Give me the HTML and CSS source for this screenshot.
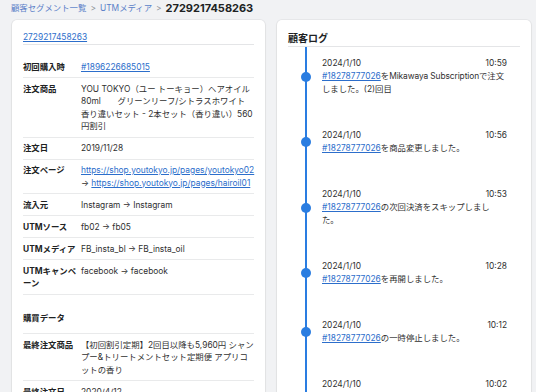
FILE: index.html
```html
<!DOCTYPE html>
<html lang="ja">
<head>
    <meta charset="UTF-8">
    <meta name="viewport" content="width=device-width, initial-scale=1.0">
    <title>2729217458263</title>
    <link rel="stylesheet" href="styles.css">
</head>
<body>
    <!-- Breadcrumb -->
    <nav class="breadcrumb">
        <a href="#">顧客セグメント一覧</a>
        <span class="sep">&gt;</span>
        <a href="#">UTMメディア</a>
        <span class="sep">&gt;</span>
        <span class="current">2729217458263</span>
    </nav>

    <div class="layout">
        <!-- Customer detail -->
        <section class="card">
            <div class="card-head">
                <a href="#" class="link">2729217458263</a>
            </div>
            <div class="rows">
                <div class="row">
                    <div class="label">初回購入時</div>
                    <div class="value"><a href="#" class="link">#1896226685015</a></div>
                </div>
                <div class="row">
                    <div class="label">注文商品</div>
                    <div class="value">YOU TOKYO（ユー トーキョー）ヘアオイル 80ml　　グリーンリーフ/シトラスホワイト<br>香り違いセット - 2本セット（香り違い）560円割引</div>
                </div>
                <div class="row">
                    <div class="label">注文日</div>
                    <div class="value">2019/11/28</div>
                </div>
                <div class="row">
                    <div class="label">注文ページ</div>
                    <div class="value"><a href="#" class="link">https://shop.youtokyo.jp/pages/youtokyo02</a><br>→ <a href="#" class="link">https://shop.youtokyo.jp/pages/hairoil01</a></div>
                </div>
                <div class="row">
                    <div class="label">流入元</div>
                    <div class="value">Instagram → Instagram</div>
                </div>
                <div class="row">
                    <div class="label">UTMソース</div>
                    <div class="value">fb02 → fb05</div>
                </div>
                <div class="row">
                    <div class="label">UTMメディア</div>
                    <div class="value">FB_insta_bl → FB_insta_oil</div>
                </div>
                <div class="row">
                    <div class="label">UTMキャンペーン</div>
                    <div class="value">facebook → facebook</div>
                </div>
                <div class="section-title">購買データ</div>
                <div class="row">
                    <div class="label">最終注文商品</div>
                    <div class="value">【初回割引定期】2回目以降も5,960円 シャンプー&amp;トリートメントセット定期便 アプリコットの香り</div>
                </div>
                <div class="row">
                    <div class="label">最終注文日</div>
                    <div class="value">2020/4/12</div>
                </div>
            </div>
        </section>

        <!-- Customer log -->
        <section class="card">
            <h2 class="card-title">顧客ログ</h2>
            <ul class="timeline">
                <li class="entry">
                    <div class="entry-meta"><span>2024/1/10</span><span>10:59</span></div>
                    <p><a href="#" class="link">#18278777026</a>を<span class="store">Mikawaya Subscription</span>で注文しました。(2)回目</p>
                </li>
                <li class="entry">
                    <div class="entry-meta"><span>2024/1/10</span><span>10:56</span></div>
                    <p><a href="#" class="link">#18278777026</a>を商品変更しました。</p>
                </li>
                <li class="entry">
                    <div class="entry-meta"><span>2024/1/10</span><span>10:53</span></div>
                    <p><a href="#" class="link">#18278777026</a>の次回決済をスキップしました。</p>
                </li>
                <li class="entry">
                    <div class="entry-meta"><span>2024/1/10</span><span>10:28</span></div>
                    <p><a href="#" class="link">#18278777026</a>を再開しました。</p>
                </li>
                <li class="entry">
                    <div class="entry-meta"><span>2024/1/10</span><span>10:12</span></div>
                    <p><a href="#" class="link">#18278777026</a>の一時停止しました。</p>
                </li>
                <li class="entry">
                    <div class="entry-meta"><span>2024/1/10</span><span>10:02</span></div>
                    <p><a href="#" class="link">#18278777026</a>を<span class="store">Mikawaya Subscription</span>で注文しました。(1)回目</p>
                </li>
            </ul>
        </section>
    </div>
</body>
</html>
```

FILE: styles.css
```css
* {
    margin: 0;
    padding: 0;
    box-sizing: border-box;
}

body {
    background: #f1f2f4;
    font-family: Inter, "Noto Sans CJK JP", sans-serif;
    font-size: 8.4px;
    line-height: 12.5px;
    color: #303030;
}

.link {
    color: #2c6ecb;
    text-decoration: underline;
}

/* Breadcrumb */
.breadcrumb {
    display: flex;
    align-items: center;
    gap: 4px;
    padding: 0 11px;
    height: 16px;
    margin-bottom: 4px;
}

.breadcrumb a {
    color: #5a7fc8;
    text-decoration: none;
}

.breadcrumb .sep {
    color: #8c9196;
}

.breadcrumb .current {
    font-size: 11px;
    font-weight: 700;
    color: #202223;
}

/* Layout */
.layout {
    display: grid;
    grid-template-columns: 253px 254px;
    gap: 12px;
    padding-left: 12px;
}

.card {
    background: #fff;
    border-radius: 5px;
    box-shadow: 0 0 0 1px rgba(63, 63, 68, 0.05), 0 1px 2px rgba(63, 63, 68, 0.12);
    padding: 11px 11px 0;
}

.card-head {
    border-bottom: 1px solid #e4e5e7;
    height: 14px;
    line-height: 13px;
}

.rows {
    margin-top: 11px;
}

.row {
    display: grid;
    grid-template-columns: 58px 1fr;
    padding: 4.5px 0 4px;
    border-bottom: 1px solid #e9eaeb;
}

.label {
    font-weight: 700;
    color: #202223;
    padding-right: 3px;
}

.value {
    color: #303030;
}

.section-title {
    font-weight: 700;
    color: #202223;
    padding: 17px 0 9px;
    border-bottom: 1px solid #e9eaeb;
}

/* Log */
.card-title {
    font-size: 10px;
    line-height: 15px;
    font-weight: 700;
    color: #202223;
    border-bottom: 1px solid #e4e5e7;
}

.timeline {
    list-style: none;
    position: relative;
    padding-top: 10px;
}

.timeline::before {
    content: "";
    position: absolute;
    left: 17px;
    top: 0;
    bottom: 0;
    width: 2px;
    background: #2a7de1;
}

.entry {
    position: relative;
    padding: 0 13px 0 34px;
    margin-bottom: 33px;
    line-height: 13px;
}

.entry p {
    padding-right: 1px;
}

.entry .store {
    letter-spacing: -0.1px;
}

.entry::before {
    content: "";
    position: absolute;
    left: 13px;
    top: 50%;
    width: 10px;
    height: 10px;
    margin-top: -5px;
    border-radius: 50%;
    background: #2a7de1;
}

.entry-meta {
    display: flex;
    justify-content: space-between;
}
```
